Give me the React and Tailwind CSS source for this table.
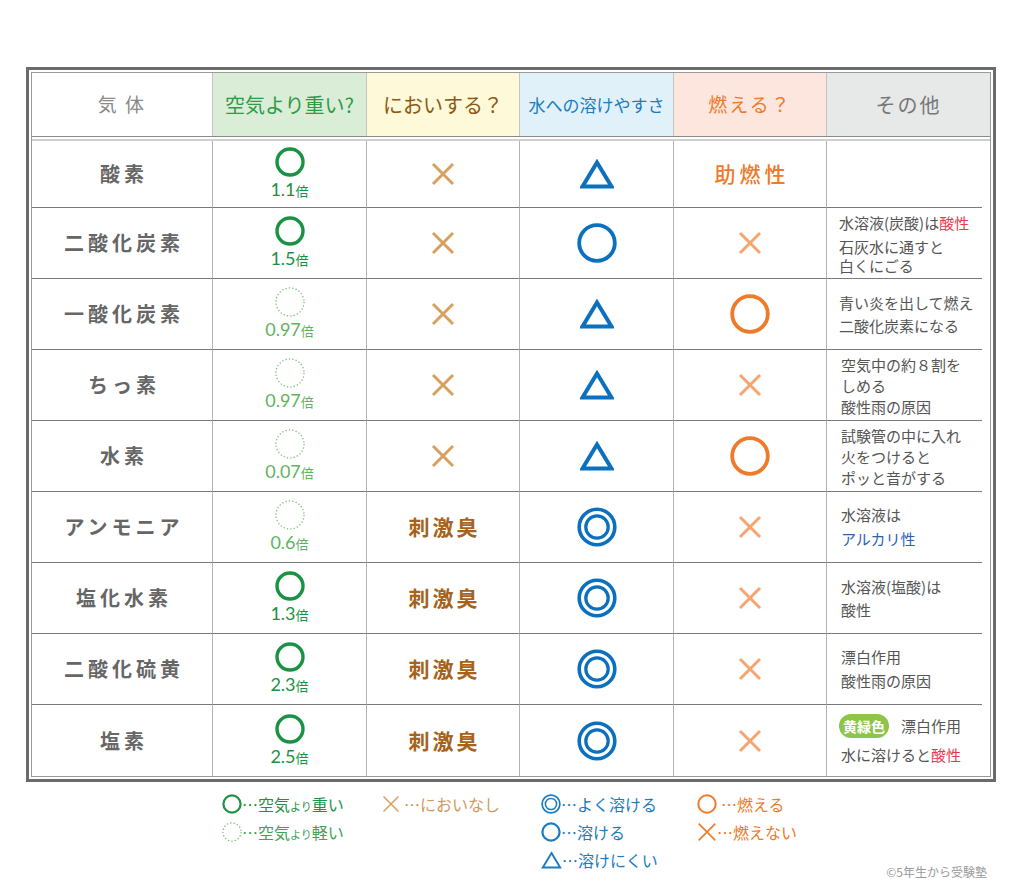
import React from "react";

const grid = "grid grid-cols-[181px_154px_153px_154px_153px_1fr]";

const Ring = ({ size, stroke, color, dotted }) => (
  <svg width={size} height={size} viewBox={`0 0 ${size} ${size}`}>
    <circle
      cx={size / 2}
      cy={size / 2}
      r={size / 2 - stroke / 2 - 0.3}
      fill="none"
      stroke={color}
      strokeWidth={stroke}
      strokeDasharray={dotted ? "1.3 2.1" : undefined}
    />
  </svg>
);

const Double = ({ size, stroke, color }) => (
  <svg width={size} height={size} viewBox="0 0 40 40">
    <circle cx="20" cy="20" r="17.8" fill="none" stroke={color} strokeWidth={stroke} />
    <circle cx="20" cy="20" r="11.2" fill="none" stroke={color} strokeWidth={stroke * 0.9} />
  </svg>
);

const Cross = ({ size, stroke, color }) => (
  <svg width={size} height={size} viewBox="0 0 24 24">
    <path d="M2 2 L22 22 M22 2 L2 22" stroke={color} strokeWidth={stroke} fill="none" />
  </svg>
);

const Tri = ({ w, h, stroke, color }) => (
  <svg width={w} height={h} viewBox="0 0 34 30">
    <polygon points="17,3.5 31.5,27.5 2.5,27.5" fill="none" stroke={color} strokeWidth={stroke} />
  </svg>
);

const red = "text-[#e8384f]";

const rows = [
  {
    name: "酸素",
    heavy: true,
    num: "1.1",
    smell: "x",
    water: "tri",
    burn: "助燃性",
    other: null,
  },
  {
    name: "二酸化炭素",
    heavy: true,
    num: "1.5",
    smell: "x",
    water: "circle",
    burn: "x",
    other: (
      <div className="flex flex-col">
        <div className="leading-[21px] mb-[4px]">
          水溶液(炭酸)は<span className={red}>酸性</span>
        </div>
        <div className="leading-[19px]">石灰水に通すと</div>
        <div className="leading-[19px]">白くにごる</div>
      </div>
    ),
  },
  {
    name: "一酸化炭素",
    heavy: false,
    num: "0.97",
    smell: "x",
    water: "tri",
    burn: "circle",
    other: (
      <div className="leading-[23px]">
        <div>青い炎を出して燃え</div>
        <div>二酸化炭素になる</div>
      </div>
    ),
  },
  {
    name: "ちっ素",
    heavy: false,
    num: "0.97",
    smell: "x",
    water: "tri",
    burn: "x",
    other: (
      <div className="leading-[21px] pl-[2px]">
        <div>空気中の約８割を</div>
        <div>しめる</div>
        <div>酸性雨の原因</div>
      </div>
    ),
  },
  {
    name: "水素",
    heavy: false,
    num: "0.07",
    smell: "x",
    water: "tri",
    burn: "circle",
    other: (
      <div className="leading-[21px] pl-[2px]">
        <div>試験管の中に入れ</div>
        <div>火をつけると</div>
        <div>ポッと音がする</div>
      </div>
    ),
  },
  {
    name: "アンモニア",
    heavy: false,
    num: "0.6",
    smell: "刺激臭",
    water: "double",
    burn: "x",
    other: (
      <div className="leading-[24px] pl-[2px]">
        <div>水溶液は</div>
        <div className="text-[#2d5fb3]">アルカリ性</div>
      </div>
    ),
  },
  {
    name: "塩化水素",
    heavy: true,
    num: "1.3",
    smell: "刺激臭",
    water: "double",
    burn: "x",
    other: (
      <div className="leading-[23px] pl-[2px]">
        <div>水溶液(塩酸)は</div>
        <div>酸性</div>
      </div>
    ),
  },
  {
    name: "二酸化硫黄",
    heavy: true,
    num: "2.3",
    smell: "刺激臭",
    water: "double",
    burn: "x",
    other: (
      <div className="leading-[24px] pl-[2px]">
        <div>漂白作用</div>
        <div>酸性雨の原因</div>
      </div>
    ),
  },
  {
    name: "塩素",
    heavy: true,
    num: "2.5",
    smell: "刺激臭",
    water: "double",
    burn: "x",
    other: (
      <div className="flex flex-col">
        <div className="flex items-center gap-[12px] mb-[6px]">
          <span className="bg-[#8dc44a] text-white font-bold text-[14px] rounded-full w-[50px] h-[24px] flex items-center justify-center">
            黄緑色
          </span>
          <span>漂白作用</span>
        </div>
        <div className="pl-[2px]">
          水に溶けると<span className={red}>酸性</span>
        </div>
      </div>
    ),
  },
];

const headers = [
  { label: "気 体", cls: "bg-white text-[#8a8a8a] text-[19px] tracking-[2px]" },
  { label: "空気より重い?", cls: "bg-[#daedd6] text-[#2f9a48] text-[20px]" },
  { label: "においする？", cls: "bg-[#fdf9d9] text-[#8b5a14] text-[20px]" },
  { label: "水への溶けやすさ", cls: "bg-[#e0f1fa] text-[#1b7cc0] text-[17px]" },
  { label: "燃える？", cls: "bg-[#fde6de] text-[#ee7a2a] text-[19px] tracking-[2px]" },
  { label: "その他", cls: "bg-[#e7e8e8] text-[#777] text-[20px] tracking-[2px]" },
];

const cell = "flex items-center justify-center border-r border-[#b4b4b4]";

const App = () => {
  return (
    <div className="min-h-screen bg-white pt-[67px] font-['Noto_Sans_CJK_JP',sans-serif]">
      <div className="ml-[26px] w-[970px] border-[3px] border-[#6b6b6b] p-[2px]">
        <div className="border border-[#9a9a9a]">
          <div className={`${grid} h-[64px] border-b border-[#8a8a8a]`}>
            {headers.map((h, i) => (
              <div
                key={i}
                className={`flex items-center justify-center ${h.cls} ${i < 5 ? "border-r border-[#c4c4c4]" : ""}`}
              >
                {h.label}
              </div>
            ))}
          </div>
          <div className="h-[4px] border-b-2 border-[#cfcfcf]" />

          {rows.map((r, i) => {
            const last = i === rows.length - 1;
            const line = last ? "" : "border-b border-b-[#7a7a7a]";
            return (
              <div key={r.name} className={`${grid} ${i === 0 ? "h-[67px]" : "h-[71px]"}`}>
                <div className={`${cell} ${line} text-[20px] font-bold text-[#666] tracking-[4px] pl-[4px]`}>
                  {r.name}
                </div>
                <div className={`${cell} ${line} flex-col`}>
                  <Ring size={30} stroke={r.heavy ? 3.4 : 1.3} color={r.heavy ? "#1a9244" : "#78c078"} dotted={!r.heavy} />
                  <div
                    className={`font-['Lato',sans-serif] text-[18px] leading-[20px] mt-[2px] ${r.heavy ? "text-[#1a9244]" : "text-[#5fb35f]"}`}
                  >
                    {r.num}
                    <span className="font-['Noto_Sans_CJK_JP',sans-serif] text-[13px]">倍</span>
                  </div>
                </div>
                <div className={`${cell} ${line}`}>
                  {r.smell === "x" ? (
                    <Cross size={24} stroke={3} color="#d8a05f" />
                  ) : (
                    <span className="text-[21px] font-bold text-[#a5631c] tracking-[3px] pl-[3px]">{r.smell}</span>
                  )}
                </div>
                <div className={`${cell} ${line}`}>
                  {r.water === "tri" && <Tri w={34} h={30} stroke={4} color="#0b70bd" />}
                  {r.water === "circle" && <Ring size={40} stroke={3.8} color="#0b70bd" />}
                  {r.water === "double" && <Double size={40} stroke={3.6} color="#0b70bd" />}
                </div>
                <div className={`${cell} ${line}`}>
                  {r.burn === "x" && <Cross size={24} stroke={3} color="#f6a470" />}
                  {r.burn === "circle" && <Ring size={40} stroke={3.8} color="#ee7a2a" />}
                  {r.burn === "助燃性" && (
                    <span className="text-[21px] font-medium text-[#ee7a2a] tracking-[4px] pl-[4px]">助燃性</span>
                  )}
                </div>
                <div className="flex flex-col">
                  <div className="flex-1 flex items-center pl-[12px] text-[15px] text-[#555]">{r.other}</div>
                  {!last && <div className="h-px bg-[#7a7a7a] mr-[8px]" />}
                </div>
              </div>
            );
          })}
        </div>
      </div>

      <div className="ml-[26px] w-[970px] flex pl-[196px] pt-[8px] text-[16px]">
        <div className="w-[160px] flex flex-col text-[#1f9145]">
          <div className="flex items-center h-[28px]">
            <Ring size={20} stroke={2.2} color="#1f9145" />
            <span>…空気<span className="text-[11px]">より</span>重い</span>
          </div>
          <div className="flex items-center h-[28px] text-[#3ea356]">
            <Ring size={20} stroke={1.2} color="#6bbb6b" dotted />
            <span>…空気<span className="text-[11px]">より</span>軽い</span>
          </div>
        </div>
        <div className="w-[159px] flex flex-col text-[#cf9a5c]">
          <div className="flex items-center h-[28px] gap-[4px]">
            <Cross size={18} stroke={2} color="#d8a05f" />
            <span>…においなし</span>
          </div>
        </div>
        <div className="w-[156px] flex flex-col text-[#1b7cc0]">
          <div className="flex items-center h-[28px]">
            <Double size={20} stroke={3.4} color="#1b7cc0" />
            <span>…よく溶ける</span>
          </div>
          <div className="flex items-center h-[28px]">
            <Ring size={20} stroke={2.2} color="#1b7cc0" />
            <span>…溶ける</span>
          </div>
          <div className="flex items-center h-[28px]">
            <Tri w={21} h={18} stroke={3.2} color="#1b7cc0" />
            <span>…溶けにくい</span>
          </div>
        </div>
        <div className="w-[140px] flex flex-col text-[#ee7a2a]">
          <div className="flex items-center h-[28px] gap-[4px]">
            <Ring size={20} stroke={2} color="#ee7a2a" />
            <span>…燃える</span>
          </div>
          <div className="flex items-center h-[28px]">
            <Cross size={20} stroke={2} color="#ee7a2a" />
            <span>…燃えない</span>
          </div>
        </div>
        <div className="ml-auto self-end mr-[9px] mb-[-7px] text-[12px] text-[#999]">©5年生から受験塾</div>
      </div>
    </div>
  );
};

export default App;
